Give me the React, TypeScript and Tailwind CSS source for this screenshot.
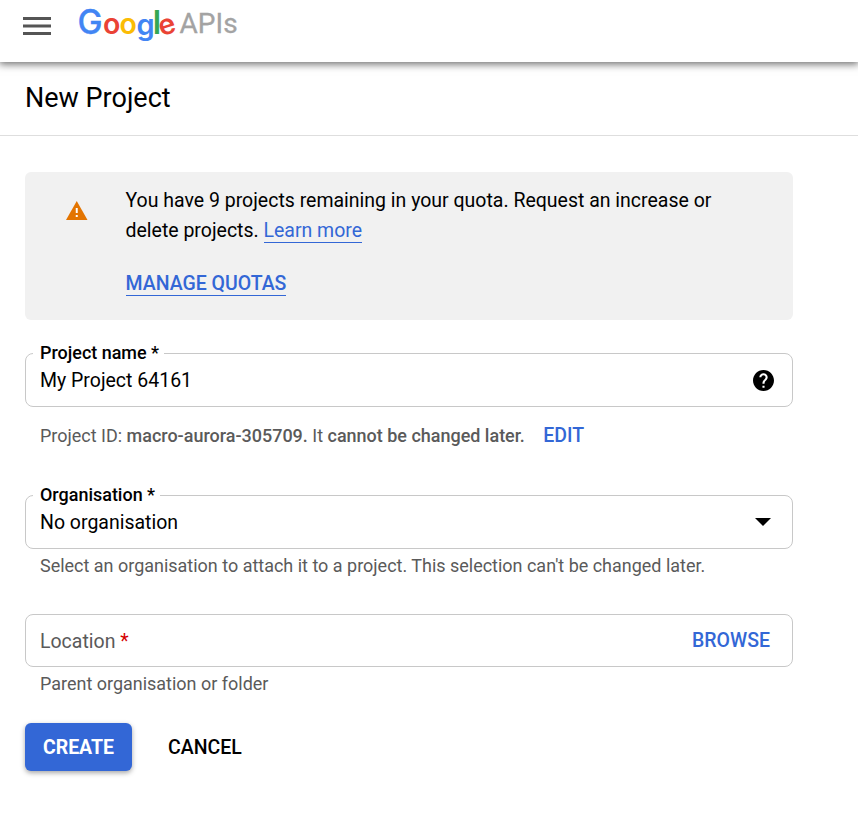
import type { ReactNode } from "react";

function GoogleLogo() {
  return (
    <svg
      className="h-[46px] w-[162px] font-[Inter,sans-serif] text-[28.5px] font-semibold"
      viewBox="78 0 162 46"
      aria-label="Google APIs"
    >
      <text x="77.5" y="34.2" fill="#4285f4" className="text-[33.5px] font-medium" stroke="#4285f4" strokeWidth="0.3">G</text>
      <text x="102.9" y="34.2" fill="#ea4335">o</text>
      <text x="119.6" y="34.2" fill="#fbbc05">o</text>
      <text x="136.4" y="34.5" fill="#4285f4" className="text-[29px]">g</text>
      <text x="152.8" y="34" fill="#34a853" className="text-[32px]">l</text>
      <text x="158.7" y="34.2" fill="#ea4335" transform="rotate(-18 167.5 26.5)">e</text>
      <text
        x="179.6"
        y="33"
        fill="#a3a3a3"
        stroke="#a3a3a3"
        strokeWidth="0.3"
        className="font-[Roboto,sans-serif] text-[28px] font-normal"
      >
        APIs
      </text>
    </svg>
  );
}

function OutlinedField({ label, children }: { label: string; children: ReactNode }) {
  return (
    <fieldset className="h-[66px] rounded-lg border border-[#c8c8c8] pr-[18px] pl-[7px]">
      <legend className="h-6 pr-[5px] pl-[7px] text-[17.97px] leading-6 font-medium">{label}</legend>
      <div className="flex h-[31px] items-center justify-between pl-[7px]">{children}</div>
    </fieldset>
  );
}

export default function App() {
  return (
    <div className="h-[827px] overflow-hidden bg-white font-[Roboto,sans-serif] text-[19.49px] text-black">
      <header className="flex h-[62px] items-start bg-white pl-[23px] shadow-[0_1px_8px_1px_rgba(0,0,0,0.6)]">
        <svg className="mt-[17px] mr-[27px] h-[18px] w-7" viewBox="0 0 28 18" fill="#555">
          <rect width="28" height="3" />
          <rect y="7.5" width="28" height="3" />
          <rect y="15" width="28" height="3" />
        </svg>
        <GoogleLogo />
      </header>

      <div className="flex h-[74px] items-center border-b border-[#dedede] pb-[2px] pl-[25px]">
        <h1 className="text-[27px] leading-9">New Project</h1>
      </div>

      <main className="ml-[25px] w-[768px] pt-9">
        <section className="flex h-[148px] rounded-md bg-[#f1f1f1] pl-[41px]">
          <svg className="mt-[29px] mr-[38px] h-[19px] w-[21.5px] shrink-0" viewBox="0 0 22 19" preserveAspectRatio="none">
            <path d="M11 0 22 19H0Z" fill="#e37400" />
            <path d="M10 7h2v5h-2zM10 14h2v2h-2z" fill="#fff" />
          </svg>
          <div className="pt-[14px]">
            <p className="w-[620px] leading-[30px]">
              You have 9 projects remaining in your quota. Request an increase or delete projects.{" "}
              <a className="border-b border-[#3367d6] text-[#3367d6]">Learn more</a>
            </p>
            <p className="mt-[23px] leading-[30px]">
              <a className="border-b border-[#3367d6] font-medium text-[#3367d6]">MANAGE QUOTAS</a>
            </p>
          </div>
        </section>

        <div className="mt-[21px]">
          <OutlinedField label="Project name *">
            <span>My Project 64161</span>
            <svg className="mb-px h-[21px] w-[21px]" viewBox="2 2 20 20">
              <path d="M12 2C6.48 2 2 6.48 2 12s4.48 10 10 10 10-4.48 10-10S17.52 2 12 2zm1 17h-2v-2h2v2zm2.07-7.75-.9.92C13.45 12.9 13 13.5 13 15h-2v-.5c0-1.1.45-2.1 1.17-2.83l1.24-1.26c.37-.36.59-.86.59-1.41 0-1.1-.9-2-2-2s-2 .9-2 2H8c0-2.21 1.79-4 4-4s4 1.79 4 4c0 .88-.36 1.68-.93 2.25z" />
            </svg>
          </OutlinedField>
        </div>
        <p className="mt-[17px] flex pl-[15px] text-[17.98px] leading-6 text-[#5a5a5a]">
          <span>
            Project ID: <b className="font-medium">macro-aurora-305709.</b> It{" "}
            <b className="font-medium">cannot be changed later.</b>
          </span>
          <a className="ml-[18.5px] text-[19.49px] font-medium text-[#3367d6]">EDIT</a>
        </p>

        <div className="mt-[35px]">
          <OutlinedField label="Organisation *">
            <span>No organisation</span>
            <svg className="mr-[3px] mb-[2px] h-2 w-[16px]" viewBox="0 0 16 8">
              <path d="M0 0h16L8 8z" />
            </svg>
          </OutlinedField>
        </div>
        <p className="mt-[5px] pl-[15px] text-[17.98px] leading-6 text-[#5a5a5a]">
          Select an organisation to attach it to a project. This selection can't be changed later.
        </p>

        <div className="mt-9 flex h-[53px] items-center justify-between rounded-lg border border-[#c8c8c8] pr-[22px] pl-[14px]">
          <span className="pt-[2px] text-[#5a5a5a]">
            Location <span className="text-[#d50000]">*</span>
          </span>
          <a className="font-medium text-[#3367d6]">BROWSE</a>
        </div>
        <p className="mt-[5px] pl-[15px] text-[17.98px] leading-6 text-[#5a5a5a]">Parent organisation or folder</p>

        <div className="mt-[27px] flex items-center gap-9">
          <button className="h-12 w-[107px] rounded-md bg-[#3367d6] pt-[2px] font-bold text-white shadow-[0_2px_5px_rgba(0,0,0,0.35)]">
            CREATE
          </button>
          <button className="pt-[2px] font-medium">CANCEL</button>
        </div>
      </main>
    </div>
  );
}
